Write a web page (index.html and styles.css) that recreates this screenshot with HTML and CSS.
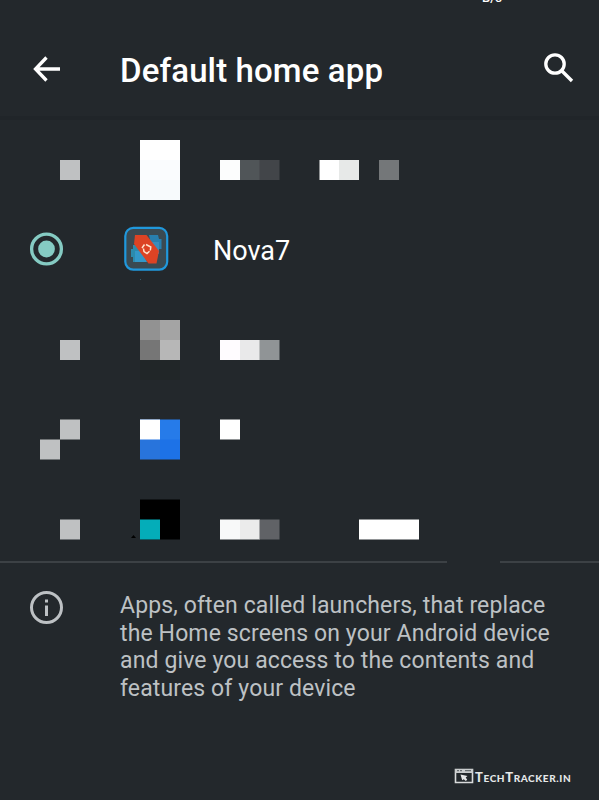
FILE: index.html
```
<!DOCTYPE html>
<html lang="en">
<head>
<meta charset="utf-8">
<title>Default home app</title>
<link rel="stylesheet" href="styles.css">
</head>
<body>
<div class="status"><span class="rate">B/s</span></div>
<header class="bar">
  <svg class="back" width="28" height="28" viewBox="0 0 28 28"><path d="M27 14H3M13.500 2.500L2.500 14L13.500 25.500" fill="none" stroke="#fff" stroke-width="3.300"/></svg>
  <h1 class="title">Default home app</h1>
  <svg class="search" width="30" height="30" viewBox="0 0 30 30"><g fill="none" stroke="#fff" stroke-width="3.300"><circle cx="11" cy="11" r="9.200"/><path d="M17.500 17.500L28 28"/></g></svg>
</header>
<main class="list">
  <div class="row tall">
    <svg class="radio" viewBox="0 0 120 100" shape-rendering="crispEdges"><rect x="60" y="40" width="20" height="20" fill="#bfc1c2"/></svg>
    <svg class="icon" viewBox="0 0 93 100" shape-rendering="crispEdges"><path fill="#fff" d="M20 20h40v20H20z"/><path fill="#fafcfe" d="M20 40h40v20H20z"/><path fill="#f7fafc" d="M20 60h40v20H20z"/></svg>
    <svg class="label" viewBox="0 0 386 100"><path fill="#fcfdfd" d="M7 40h20v20H7z"/><path fill="#505558" d="M27 40h20v20H27z"/><path fill="#424549" d="M46.500 40h20v20h-20z"/><path fill="#fff" d="M106.500 40h20v20h-20z"/><path fill="#e7e9e8" d="M126 40h20v20h-20z"/><path fill="#747779" d="M166 40h20v20h-20z"/></svg>
  </div>
  <div class="row">
    <svg class="radio" viewBox="0 0 120 80"><circle cx="46.500" cy="29" r="14.900" fill="none" stroke="#85cbc3" stroke-width="3.300"/><circle cx="46.500" cy="29" r="8.400" fill="#85cbc3"/></svg>
    <svg class="icon" viewBox="0 0 93 80">
      <rect x="5.300" y="7.900" width="41.900" height="41.800" rx="8" fill="#3a4a52" stroke="#2098dc" stroke-width="2.200"/>
      <path d="M29 15h9l1 4h2.500v10H39v5h-6z" fill="#287fae"/><path d="M29 22h10v11h-5z" fill="#398dbb"/>
      <path d="M11 29h2v-4h10v17H13v-5h-2z" fill="#2b8bae"/><path d="M15 31h7l5 11H15z" fill="#3398c9"/>
      <path d="M15 15h11.500l12.500 16-2.500 12.500h-8L14 24z" fill="#dc4324"/>
      <path d="M22 28l2.500-3.500M26 24.500l4.800 2.500-.5 3.500M29.500 31.200L27 33.500l-3-2-.5-3" fill="none" stroke="#ffe2cc" stroke-width="1.500"/>
      <rect x="20" y="59" width="1" height="1" fill="#385c6b"/>
    </svg>
    <span class="name">Nova7</span>
  </div>
  <div class="row tall">
    <svg class="radio" viewBox="0 0 120 100" shape-rendering="crispEdges"><path fill="#bfc1c2" d="M60 40h20v20H60z"/></svg>
    <svg class="icon" viewBox="0 0 93 100" shape-rendering="crispEdges"><path fill="#929292" d="M20 20h20v20H20z"/><path fill="#a4a4a4" d="M40 20h20v20H40z"/><path fill="#767676" d="M20 40h20v20H20z"/><path fill="#b7b7b7" d="M40 40h20v20H40z"/><path fill="#212628" d="M20 60h40v20H20z"/></svg>
    <svg class="label" viewBox="0 0 386 100"><path fill="#fffcff" d="M7 40h20v20H7z"/><path fill="#e9e9ea" d="M27 40h20v20H27z"/><path fill="#909496" d="M46.500 40h20v20h-20z"/></svg>
  </div>
  <div class="row">
    <svg class="radio" viewBox="0 0 120 80"><path fill="#bfc1c2" d="M60 19.500h20v20H60zM40 39.500h20v20H40z"/></svg>
    <svg class="icon" viewBox="0 0 93 80"><path fill="#267be9" d="M20 19.500h40v21H20z"/><path fill="#2874dc" d="M20 39.500h20v20H20z"/><path fill="#1d72e7" d="M40 39.500h20v20H40z"/><path fill="#fff" d="M20 19.500h20v20H20z"/></svg>
    <svg class="label" viewBox="0 0 386 80"><path fill="#fff" d="M7 19.500h20v20H7z"/></svg>
  </div>
  <div class="row">
    <svg class="radio" viewBox="0 0 120 80"><path fill="#bfc1c2" d="M60 39.500h20v20H60z"/></svg>
    <svg class="icon" viewBox="0 0 93 80"><path fill="#000" d="M20 19.500h40v40H20z"/><path fill="#04adb9" d="M20 39.500h20v20H20z"/><path fill="#000" d="M11 58l2.500-3 2.500 3z"/></svg>
    <svg class="label" viewBox="0 0 386 80"><path fill="#f8f9f9" d="M7 39.500h20v20H7z"/><path fill="#ebebeb" d="M27 39.500h20v20H27z"/><path fill="#606266" d="M46.500 39.500h20v20h-20z"/><path fill="#fff" d="M146 39.500h60v20h-60z"/></svg>
  </div>
</main>
<div class="divider"><span class="line left"></span><span class="line right"></span></div>
<section class="info">
  <svg class="info-icon" width="34" height="34" viewBox="0 0 34 34"><circle cx="16.500" cy="16.500" r="15" fill="none" stroke="#bdc1c4" stroke-width="3"/><path d="M15 8.500h3v3h-3zM15 14.500h3v10.500h-3z" fill="#bdc1c4"/></svg>
  <p class="text">Apps, often called launchers, that replace<br>the Home screens on your Android device<br>and give you access to the contents and<br>features of your device</p>
</section>
<footer class="brand">
  <svg class="logo" width="20" height="16" viewBox="0 0 20 16"><path d="M1.500 1.500h17v13h-17z" fill="none" stroke="#d8dadb" stroke-width="1.600"/><path d="M1 1h18v4H1z" fill="#c9cccd"/><path d="M3 2.700h2M6 2.700h2M11 2.700h6" stroke="#50575b"/><path d="M6.500 6.500l7 1.500-1.800 1.500 1.500 2.300-1.400 1.200-2-1.800-1.600 1z" fill="#e6e7e8"/></svg>
  <span class="word">T<small>ECH</small>T<small>RACKER.IN</small></span>
</footer>
</body>
</html>
```
FILE: styles.css
```
* { box-sizing: border-box; margin: 0; padding: 0; }
body { width: 599px; height: 800px; overflow: hidden; background: #23282c; color: #fff; font-family: Roboto, sans-serif; }
svg { display: block; flex: none; }
.status { height: 20px; overflow: hidden; padding-left: 482px; }
.rate { display: block; margin-top: -9px; font-size: 13px; line-height: 14px; font-weight: 500; }
.bar { height: 100px; display: flex; align-items: flex-start; border-bottom: 4px solid #202529; }
.back { margin: 35px 0 0 33px; }
.title { margin: 31px 0 0 59px; width: 424px; font-size: 33px; line-height: 40px; font-weight: 500; letter-spacing: 0.12px; white-space: nowrap; }
.search { margin-top: 33px; }
.row { display: flex; height: 80px; }
.row.tall { height: 100px; }
.radio { width: 120px; height: 100%; }
.icon { width: 93px; height: 100%; }
.label { width: 386px; height: 100%; }
.name { font-size: 27px; line-height: 32px; margin-top: 15px; }
.divider { display: flex; justify-content: space-between; height: 2px; margin-top: 1px; }
.line { background: #3c4145; }
.left { width: 447px; }
.right { width: 99px; }
.info { display: flex; height: 137px; padding: 28px 0 0 30px; }
.text { margin: 1px 0 0 56px; font-size: 23px; line-height: 27.500px; letter-spacing: 0.125px; color: #bdc1c4; white-space: nowrap; }
.brand { display: flex; align-items: center; height: 20px; margin: 66px 0 0 454px; }
.word { margin: 2px 0 0 1px; font-family: Lato, sans-serif; font-weight: 900; font-size: 13px; line-height: 16px; letter-spacing: 0.6px; color: #e5e7e8; white-space: nowrap; }
.word small { font-size: 10px; }
```
